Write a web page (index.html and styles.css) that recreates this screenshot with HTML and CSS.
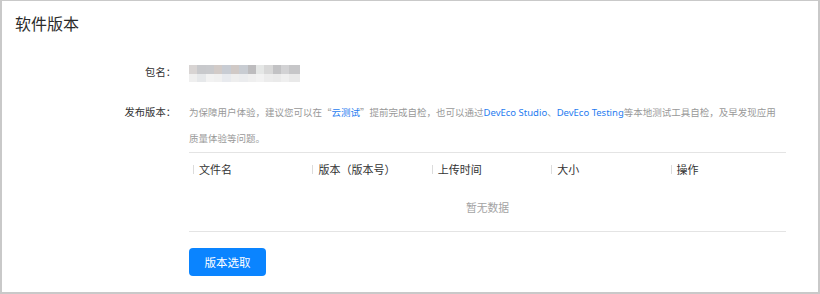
FILE: index.html
```html
<!DOCTYPE html>
<html>

<head>
    <meta charset="utf-8">
    <link rel="stylesheet" href="styles.css">
</head>

<body>
    <div class="panel">
        <h2 class="title">软件版本</h2>

        <div class="form">
            <div class="label">包名：</div>
            <div class="field">
                <div class="blur">
                    <div class="blur-top"></div>
                    <div class="blur-bottom"></div>
                </div>
            </div>

            <div class="label label-top">发布版本：</div>
            <div class="field">
                <p class="tip">为保障用户体验，建议您可以在<span class="cjk">“</span><a href="#">云测试</a><span class="cjk">”</span>提前完成自检，也可以通过<a href="#">DevEco Studio</a>、<a href="#">DevEco Testing</a>等本地测试工具自检，及早发现应用<br>质量体验等问题。</p>

                <div class="table">
                    <div class="thead">
                        <div class="th">文件名</div>
                        <div class="th">版本（版本号）</div>
                        <div class="th">上传时间</div>
                        <div class="th">大小</div>
                        <div class="th">操作</div>
                    </div>
                    <div class="empty">暂无数据</div>
                </div>

                <button class="btn-primary">版本选取</button>
            </div>
        </div>
    </div>
</body>

</html>
```

FILE: styles.css
```css
html,
body {
    margin: 0;
    padding: 0;
    background-color: #fff;
}

body {
    font-family: "Noto Sans", "Noto Sans CJK SC", sans-serif;
    color: #333;
}

.panel {
    box-sizing: border-box;
    width: 820px;
    height: 294px;
    border-style: solid;
    border-color: #c9c9c9;
    border-width: 1px 2px 2px 2px;
    padding: 12px 0 0 13px;
}

.title {
    margin: 0;
    font-size: 16px;
    line-height: 22px;
    font-weight: normal;
    color: #2b2b2b;
}

.form {
    display: grid;
    grid-template-columns: 161px 597px;
    column-gap: 13px;
    margin-top: 24px;
}

.label {
    font-size: 10.3px;
    line-height: 26px;
    text-align: right;
    color: #333;
    height: 26px;
    margin-bottom: 14px;
}

.field {
    min-height: 26px;
}

.blur {
    width: 111px;
    padding-top: 6px;
}

.blur-top {
    height: 9px;
    background: linear-gradient(90deg,
            #d8d4d3 0 8px, #c8c9cc 8px 17px, #c9cacd 17px 25px, #d2cbc8 25px 33px,
            #c8ccd3 33px 42px, #d0c9c6 42px 50px, #c8ccd2 50px 59px, #bdbcbe 59px 67px,
            #e5e7e6 67px 75px, #d8d8d8 75px 84px, #c2c2c4 84px 92px, #d2d2d4 92px 100px,
            #c6c6c8 100px 111px);
}

.blur-bottom {
    height: 8px;
    background: linear-gradient(90deg,
            #efefef 0 8px, #e6e8ea 8px 17px, #f2f2f2 17px 25px, #f0f0f0 25px 33px,
            #e8eaee 33px 42px, #eeeeee 42px 50px, #ebecee 50px 59px, #efefef 59px 67px,
            #f2f2f2 67px 75px, #ececec 75px 84px, #eaeaea 84px 92px, #efefef 92px 100px,
            #e9e9e9 100px 111px);
}

.tip {
    margin: 0;
    font-size: 9.5px;
    line-height: 26px;
    color: #999;
    white-space: nowrap;
}

.tip .cjk {
    font-family: "Noto Sans CJK SC", sans-serif;
}

.tip a {
    color: #1f7cf0;
    text-decoration: none;
}

.table {
    border-top: 1px solid #e4e4e4;
    border-bottom: 1px solid #e4e4e4;
}

.thead {
    display: grid;
    grid-template-columns: repeat(5, 1fr);
    height: 32px;
    align-items: center;
}

.th {
    position: relative;
    padding-left: 10px;
    font-size: 11px;
    color: #333;
}

.th::before {
    content: "";
    position: absolute;
    left: 4px;
    top: 50%;
    width: 1px;
    height: 9px;
    margin-top: -4px;
    background-color: #dcdcdc;
}

.empty {
    height: 46px;
    line-height: 46px;
    text-align: center;
    font-size: 10.8px;
    color: #a3a3a3;
}

.btn-primary {
    margin-top: 16px;
    width: 77px;
    height: 28px;
    border: none;
    border-radius: 4px;
    background-color: #0a84ff;
    color: #fff;
    font-family: inherit;
    font-size: 11.5px;
    cursor: pointer;
}
```
